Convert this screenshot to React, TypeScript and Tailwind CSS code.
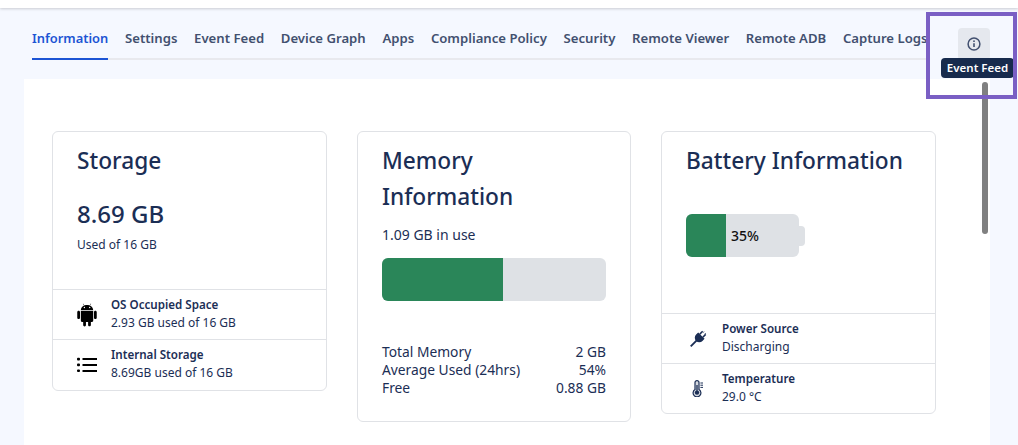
import React from "react";
import { AiFillAndroid } from "react-icons/ai";

const tabs = ["Settings", "Event Feed", "Device Graph", "Apps", "Compliance Policy", "Security", "Remote Viewer", "Remote ADB", "Capture Logs"];

function ListIcon() {
  return (
    <svg width="20" height="16" viewBox="0 0 20 16" fill="#000" className="block">
      <rect x="0" y="0.8" width="3" height="2.6" rx="1" />
      <rect x="0" y="6.6" width="3" height="2.6" rx="1" />
      <rect x="0" y="12.4" width="3" height="2.6" rx="1" />
      <rect x="5.5" y="1" width="14.5" height="2" />
      <rect x="5.5" y="7" width="14.5" height="2" />
      <rect x="5.5" y="13" width="14.5" height="2" />
    </svg>
  );
}

function PlugIcon() {
  return (
    <svg width="17" height="17" viewBox="0 0 17 17" className="block" fill="#1b2e55">
      <g transform="rotate(45 8.5 8.5)">
        <rect x="5.6" y="0.5" width="1.5" height="4" />
        <rect x="9.9" y="0.5" width="1.5" height="4" />
        <path d="M4 4.4 H13 V7.4 a4.5 4.5 0 0 1 -9 0 Z" />
        <rect x="7.6" y="11" width="1.8" height="8.5" />
      </g>
      <path d="M14 1.6 L13.3 2.6 M15.7 3.4 L14.6 4" stroke="#1b2e55" strokeWidth="0.9" fill="none" />
    </svg>
  );
}

function ThermoIcon() {
  return (
    <svg width="12" height="17" viewBox="0 0 12 17" className="block" fill="none" stroke="#1b2e55">
      <path d="M3 9.6 V2.6 a2 2 0 0 1 4 0 V9.6 a3.9 3.9 0 1 1 -4 0 Z" strokeWidth="1.2" fill="#d5d9e0" />
      <circle cx="5" cy="12.6" r="2.2" fill="#1b2e55" stroke="none" />
      <path d="M5 12 V5" strokeWidth="1.3" />
      <path d="M8.4 3 H11 M8.4 5.2 H11 M8.4 7.4 H11" strokeWidth="1" />
    </svg>
  );
}

function InfoIcon() {
  return (
    <svg width="14" height="14" viewBox="0 0 14 14" fill="none" stroke="#42506f" strokeWidth="1.5" className="block">
      <circle cx="7" cy="7" r="5.9" />
      <path d="M7 6.2 V10" strokeWidth="1.6" />
      <circle cx="7" cy="4.2" r="0.9" fill="#42506f" stroke="none" />
    </svg>
  );
}

function InfoRow({ icon, title, sub, iconClass, rowClass }: { icon: React.ReactNode; title: string; sub: string; iconClass: string; rowClass: string }) {
  return (
    <div className={rowClass}>
      <div className={iconClass}>{icon}</div>
      <div className="min-w-0">
        <div className="text-[11.6px] leading-[18px] font-semibold text-[#1b2e55]">{title}</div>
        <div className="text-[12px] leading-[18px] text-[#1b2e55]">{sub}</div>
      </div>
    </div>
  );
}

export default function App() {
  return (
    <div className="relative h-[445px] w-[1018px] overflow-hidden bg-[#f5f8ff] font-['Noto_Sans',sans-serif] text-[#1b2e55]">
      <div className="h-2 bg-white shadow-[0_1px_3px_rgba(0,0,0,0.18)]" />
      <div className="flex h-[71px] pl-8 pt-[20px]">
        <div className="flex h-[32px] w-[895px] gap-[16.7px] border-b-2 border-[#e8e9ee] text-[13.15px] font-semibold leading-[20px] text-[#42506f] whitespace-nowrap">
          <div className="h-[32px] border-b-2 border-[#1c54d4] text-[12.9px] text-[#1c54d4]">Information</div>
          {tabs.map((t) => (
            <div key={t}>{t}</div>
          ))}
        </div>
      </div>
      <div className="ml-6 h-[366px] w-[966px] bg-white pl-7 pt-[52px]">
        <div className="flex items-start gap-[30px]">
          <section className="w-[275px] rounded-md border border-[#e0e2e6]">
            <div className="h-[157px] px-6 pt-[11px]">
              <h2 className="text-[22.7px] leading-[36px] font-medium">Storage</h2>
              <div className="mt-[17px] text-[24px] leading-[36px] font-medium">8.69 GB</div>
              <div className="mt-[4px] text-[12px] leading-[18px]">Used of 16 GB</div>
            </div>
            <InfoRow rowClass="flex h-[50px] items-center border-t border-[#e0e2e6] pb-[2px]" iconClass="ml-[24px] mr-[14px] w-[20px] flex justify-center pt-[2px]" icon={<AiFillAndroid size={26} color="#000" className="shrink-0" />} title="OS Occupied Space" sub="2.93 GB used of 16 GB" />
            <InfoRow rowClass="flex h-[51px] items-center border-t border-[#e0e2e6] pb-[2px]" iconClass="ml-[24px] mr-[14px] w-[20px] pt-[2px]" icon={<ListIcon />} title="Internal Storage" sub="8.69GB used of 16 GB" />
          </section>
          <section className="h-[291px] w-[274px] rounded-md border border-[#e0e2e6] px-6 pt-[11px]">
            <h2 className="text-[22.7px] leading-[36px] font-medium">Memory Information</h2>
            <div className="mt-[9px] text-[14px] leading-[21px]">1.09 GB in use</div>
            <div className="mt-[13px] flex h-[43px] overflow-hidden rounded-md bg-[#dee1e5]">
              <div className="w-[54%] bg-[#2a8659]" />
            </div>
            <div className="mt-[42px] text-[13.8px] leading-[18px]">
              <div className="flex justify-between"><span>Total Memory</span><span>2 GB</span></div>
              <div className="flex justify-between"><span>Average Used (24hrs)</span><span>54%</span></div>
              <div className="flex justify-between"><span>Free</span><span>0.88 GB</span></div>
            </div>
          </section>
          <section className="w-[275px] rounded-md border border-[#e0e2e6]">
            <div className="h-[181px] px-6 pt-[11px]">
              <h2 className="whitespace-nowrap text-[22.7px] leading-[36px] font-medium">Battery Information</h2>
              <div className="mt-[35px] flex items-center">
                <div className="flex h-[43px] w-[113px] items-center overflow-hidden rounded-md bg-[#dee1e5]">
                  <div className="h-full w-[40px] bg-[#2a8659]" />
                  <span className="ml-[5px] text-[14px] font-medium text-[#111]">35%</span>
                </div>
                <div className="h-5 w-[6px] rounded-r-sm bg-[#dee1e5]" />
              </div>
            </div>
            <InfoRow rowClass="flex h-[50px] items-center border-t border-[#e0e2e6] pb-[1px]" iconClass="ml-[28px] mr-[15px] w-[17px]" icon={<PlugIcon />} title="Power Source" sub="Discharging" />
            <InfoRow rowClass="flex h-[50px] items-center border-t border-[#e0e2e6] pb-[1px]" iconClass="ml-[30px] mr-[17px] w-[13px]" icon={<ThermoIcon />} title="Temperature" sub="29.0 °C" />
          </section>
        </div>
      </div>
      <div className="absolute left-[958px] top-[28px] flex h-8 w-8 items-center justify-center rounded-sm bg-[#e5e8ee]">
        <InfoIcon />
      </div>
      <div className="absolute left-[941px] top-[58px] flex h-5 w-[73px] items-center justify-center rounded bg-[#172b4d] text-[11.5px] font-semibold text-white">Event Feed</div>
      <div className="absolute left-[982px] top-[82px] h-[152px] w-[6px] rounded-full bg-[#808080]" />
      <div className="absolute left-[926px] top-[12px] h-[87px] w-[91px] border-4 border-[#7a5fc4]" />
    </div>
  );
}
